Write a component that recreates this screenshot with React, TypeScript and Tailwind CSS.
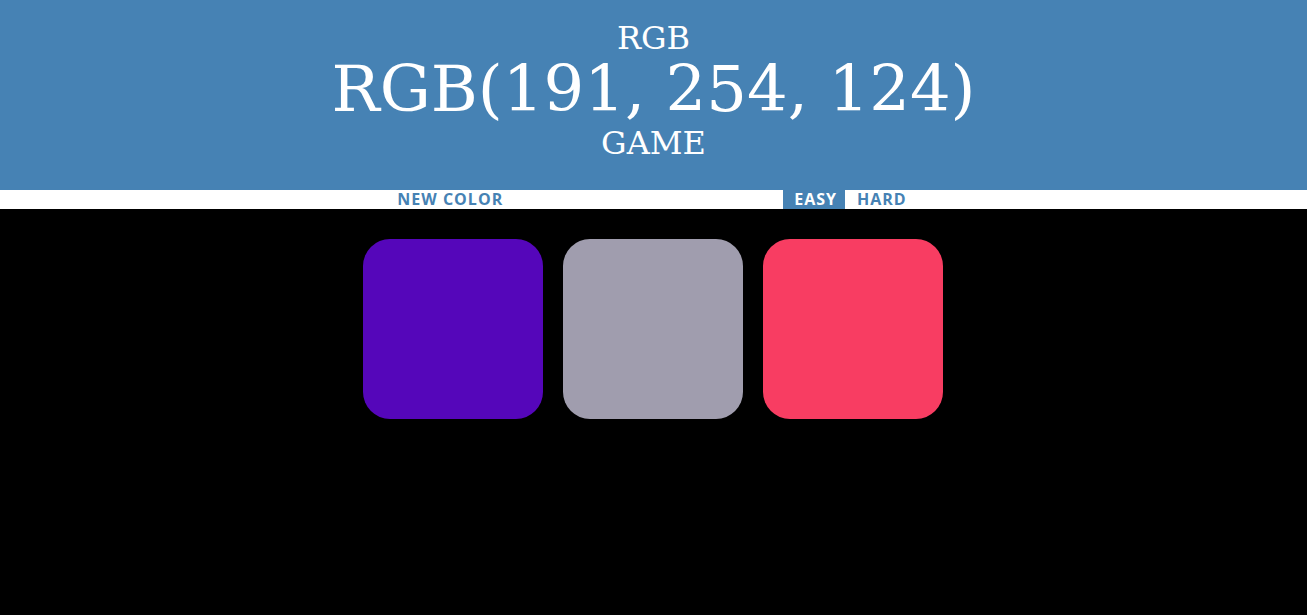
import React from "react";

const squares = ["#5506ba", "#a09dae", "#f83d62"];

export default function App() {
  return (
    <div className="min-h-[615px] bg-black">
      <h1
        className="bg-[#4682b4] text-white text-center font-normal pt-[22px] pb-[28px]"
        style={{ fontFamily: '"DejaVu Serif", serif' }}
      >
        <span className="block text-[32px] leading-[32px]">RGB</span>
        <span className="block text-[64px] leading-[70px]">RGB(191, 254, 124)</span>
        <span className="block text-[32px] leading-[38px]">GAME</span>
      </h1>
      <div
        className="flex justify-center items-stretch h-[19px] bg-white text-[16px] font-bold tracking-[1px]"
        style={{ fontFamily: '"Open Sans", sans-serif' }}
      >
        <button className="px-2 uppercase text-[#4682b4] leading-[19px]">New Color</button>
        <span className="w-[272px]"></span>
        <button className="pl-[11px] pr-2 uppercase bg-[#4682b4] text-white leading-[19px]">Easy</button>
        <button className="pl-2 pr-[11px] ml-[4px] uppercase text-[#4682b4] leading-[19px]">Hard</button>
      </div>
      <div className="max-w-[601px] mx-auto mt-[20px] flex">
        {squares.map((c) => (
          <div
            key={c}
            className="w-[180px] h-[180px] m-[10px] rounded-[27px]"
            style={{ backgroundColor: c }}
          />
        ))}
      </div>
    </div>
  );
}
